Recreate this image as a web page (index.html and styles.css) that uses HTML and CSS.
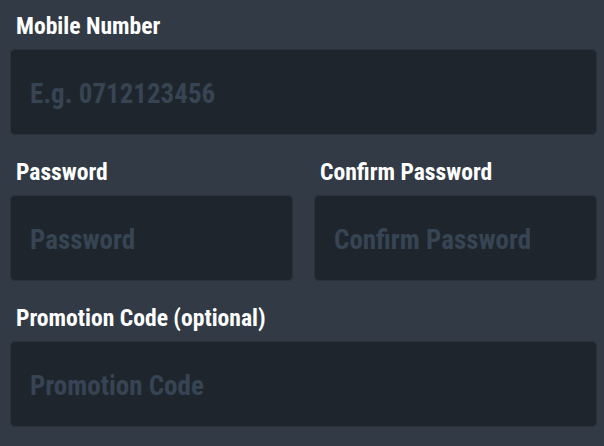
FILE: index.html
```html
<!DOCTYPE html>
<html lang="en">
<head>
    <meta charset="UTF-8">
    <meta name="viewport" content="width=device-width, initial-scale=1.0">
    <title>Register</title>
    <link rel="stylesheet" href="styles.css">
</head>
<body>

    <form class="register-form">
        <div class="field">
            <label for="mobile">Mobile Number</label>
            <input type="tel" id="mobile" name="mobile" placeholder="E.g. 0712123456">
        </div>

        <div class="row">
            <div class="field">
                <label for="password">Password</label>
                <input type="password" id="password" name="password" placeholder="Password">
            </div>
            <div class="field">
                <label for="confirm">Confirm Password</label>
                <input type="password" id="confirm" name="confirm" placeholder="Confirm Password">
            </div>
        </div>

        <div class="field">
            <label for="promo">Promotion Code (optional)</label>
            <input type="text" id="promo" name="promo" placeholder="Promotion Code">
        </div>
    </form>

</body>
</html>
```
FILE: styles.css
```css
body
{
    margin: 0;
    background: #313a45;
    font-family: Roboto, "Liberation Sans", sans-serif;
    font-stretch: 75%;
}
.register-form
{
    padding: 12px 7px 0 10px;
    display: flex;
    flex-direction: column;
    gap: 23px;
}
.row
{
    display: grid;
    grid-template-columns: 1fr 1fr;
    gap: 21px;
}
.field
{
    display: flex;
    flex-direction: column;
    gap: 9px;
}
label
{
    color: #fff;
    font-size: 23.6px;
    font-weight: bold;
    line-height: 28px;
    padding-left: 6px;
}
input
{
    box-sizing: border-box;
    width: 100%;
    height: 86px;
    margin: 0;
    padding: 3px 19px 0 19px;
    background: #1f252c;
    border: 1px solid #2a323c;
    border-radius: 5px;
    color: #fff;
    font-family: inherit;
    font-stretch: 75%;
    font-size: 27px;
    font-weight: bold;
    outline: none;
}
input::placeholder
{
    color: #364453;
}
```
